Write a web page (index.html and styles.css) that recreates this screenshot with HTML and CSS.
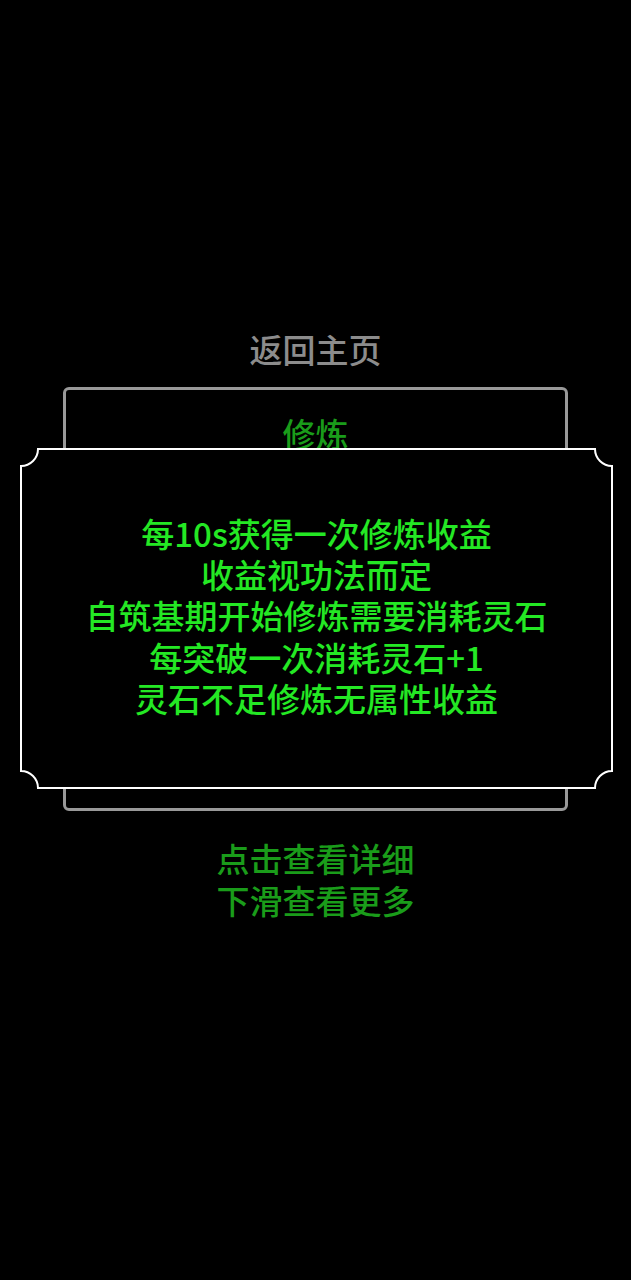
FILE: index.html
```html
<!DOCTYPE html>
<html lang="zh">
<head>
<meta charset="utf-8">
<title>修炼</title>
<link rel="stylesheet" href="styles.css">
</head>
<body>
<div class="page">
  <div class="home-link">返回主页</div>
  <div class="panel">
    <div class="panel-title">修炼</div>
  </div>
  <div class="hints">
    <div>点击查看详细</div>
    <div>下滑查看更多</div>
  </div>
</div>
<div class="popup">
  <svg class="popup-frame" width="593" height="341" viewBox="0 0 593 341" aria-hidden="true">
    <path d="M18 1 H575 A17 17 0 0 0 592 18 V323 A17 17 0 0 0 575 340 H18 A17 17 0 0 0 1 323 V18 A17 17 0 0 0 18 1 Z" fill="#000" stroke="#fff" stroke-width="2"/>
  </svg>
  <div class="popup-text">
    <div>每10s获得一次修炼收益</div>
    <div>收益视功法而定</div>
    <div>自筑基期开始修炼需要消耗灵石</div>
    <div>每突破一次消耗灵石+1</div>
    <div>灵石不足修炼无属性收益</div>
  </div>
</div>
</body>
</html>
```

FILE: styles.css
```css
html, body {
  margin: 0;
  padding: 0;
  background: #000;
}
body {
  width: 631px;
  height: 1280px;
  position: relative;
  overflow: hidden;
  font-family: "Noto Sans CJK SC", "Noto Sans", sans-serif;
  font-weight: 500;
}
.page {
  display: flex;
  flex-direction: column;
  align-items: center;
  padding-top: 328px;
}
.home-link {
  font-size: 33px;
  line-height: 42px;
  color: #8c8c8c;
}
.panel {
  box-sizing: border-box;
  margin-top: 17px;
  width: 505px;
  height: 424px;
  border: 3px solid #999;
  border-radius: 6px;
  display: flex;
  flex-direction: column;
  align-items: center;
  padding-top: 22px;
}
.panel-title {
  font-size: 33px;
  line-height: 42px;
  color: #1a9c1a;
}
.hints {
  margin-top: 26px;
  font-size: 33px;
  line-height: 42px;
  color: #1a9c1a;
  text-align: center;
}
.popup {
  position: absolute;
  left: 20px;
  top: 448px;
  width: 593px;
  height: 341px;
  display: flex;
  align-items: center;
  justify-content: center;
}
.popup-frame {
  position: absolute;
  left: 0;
  top: 0;
}
.popup-text {
  position: relative;
  font-size: 33px;
  line-height: 41.25px;
  color: #24e824;
  text-align: center;
  padding-bottom: 5px;
}
```
